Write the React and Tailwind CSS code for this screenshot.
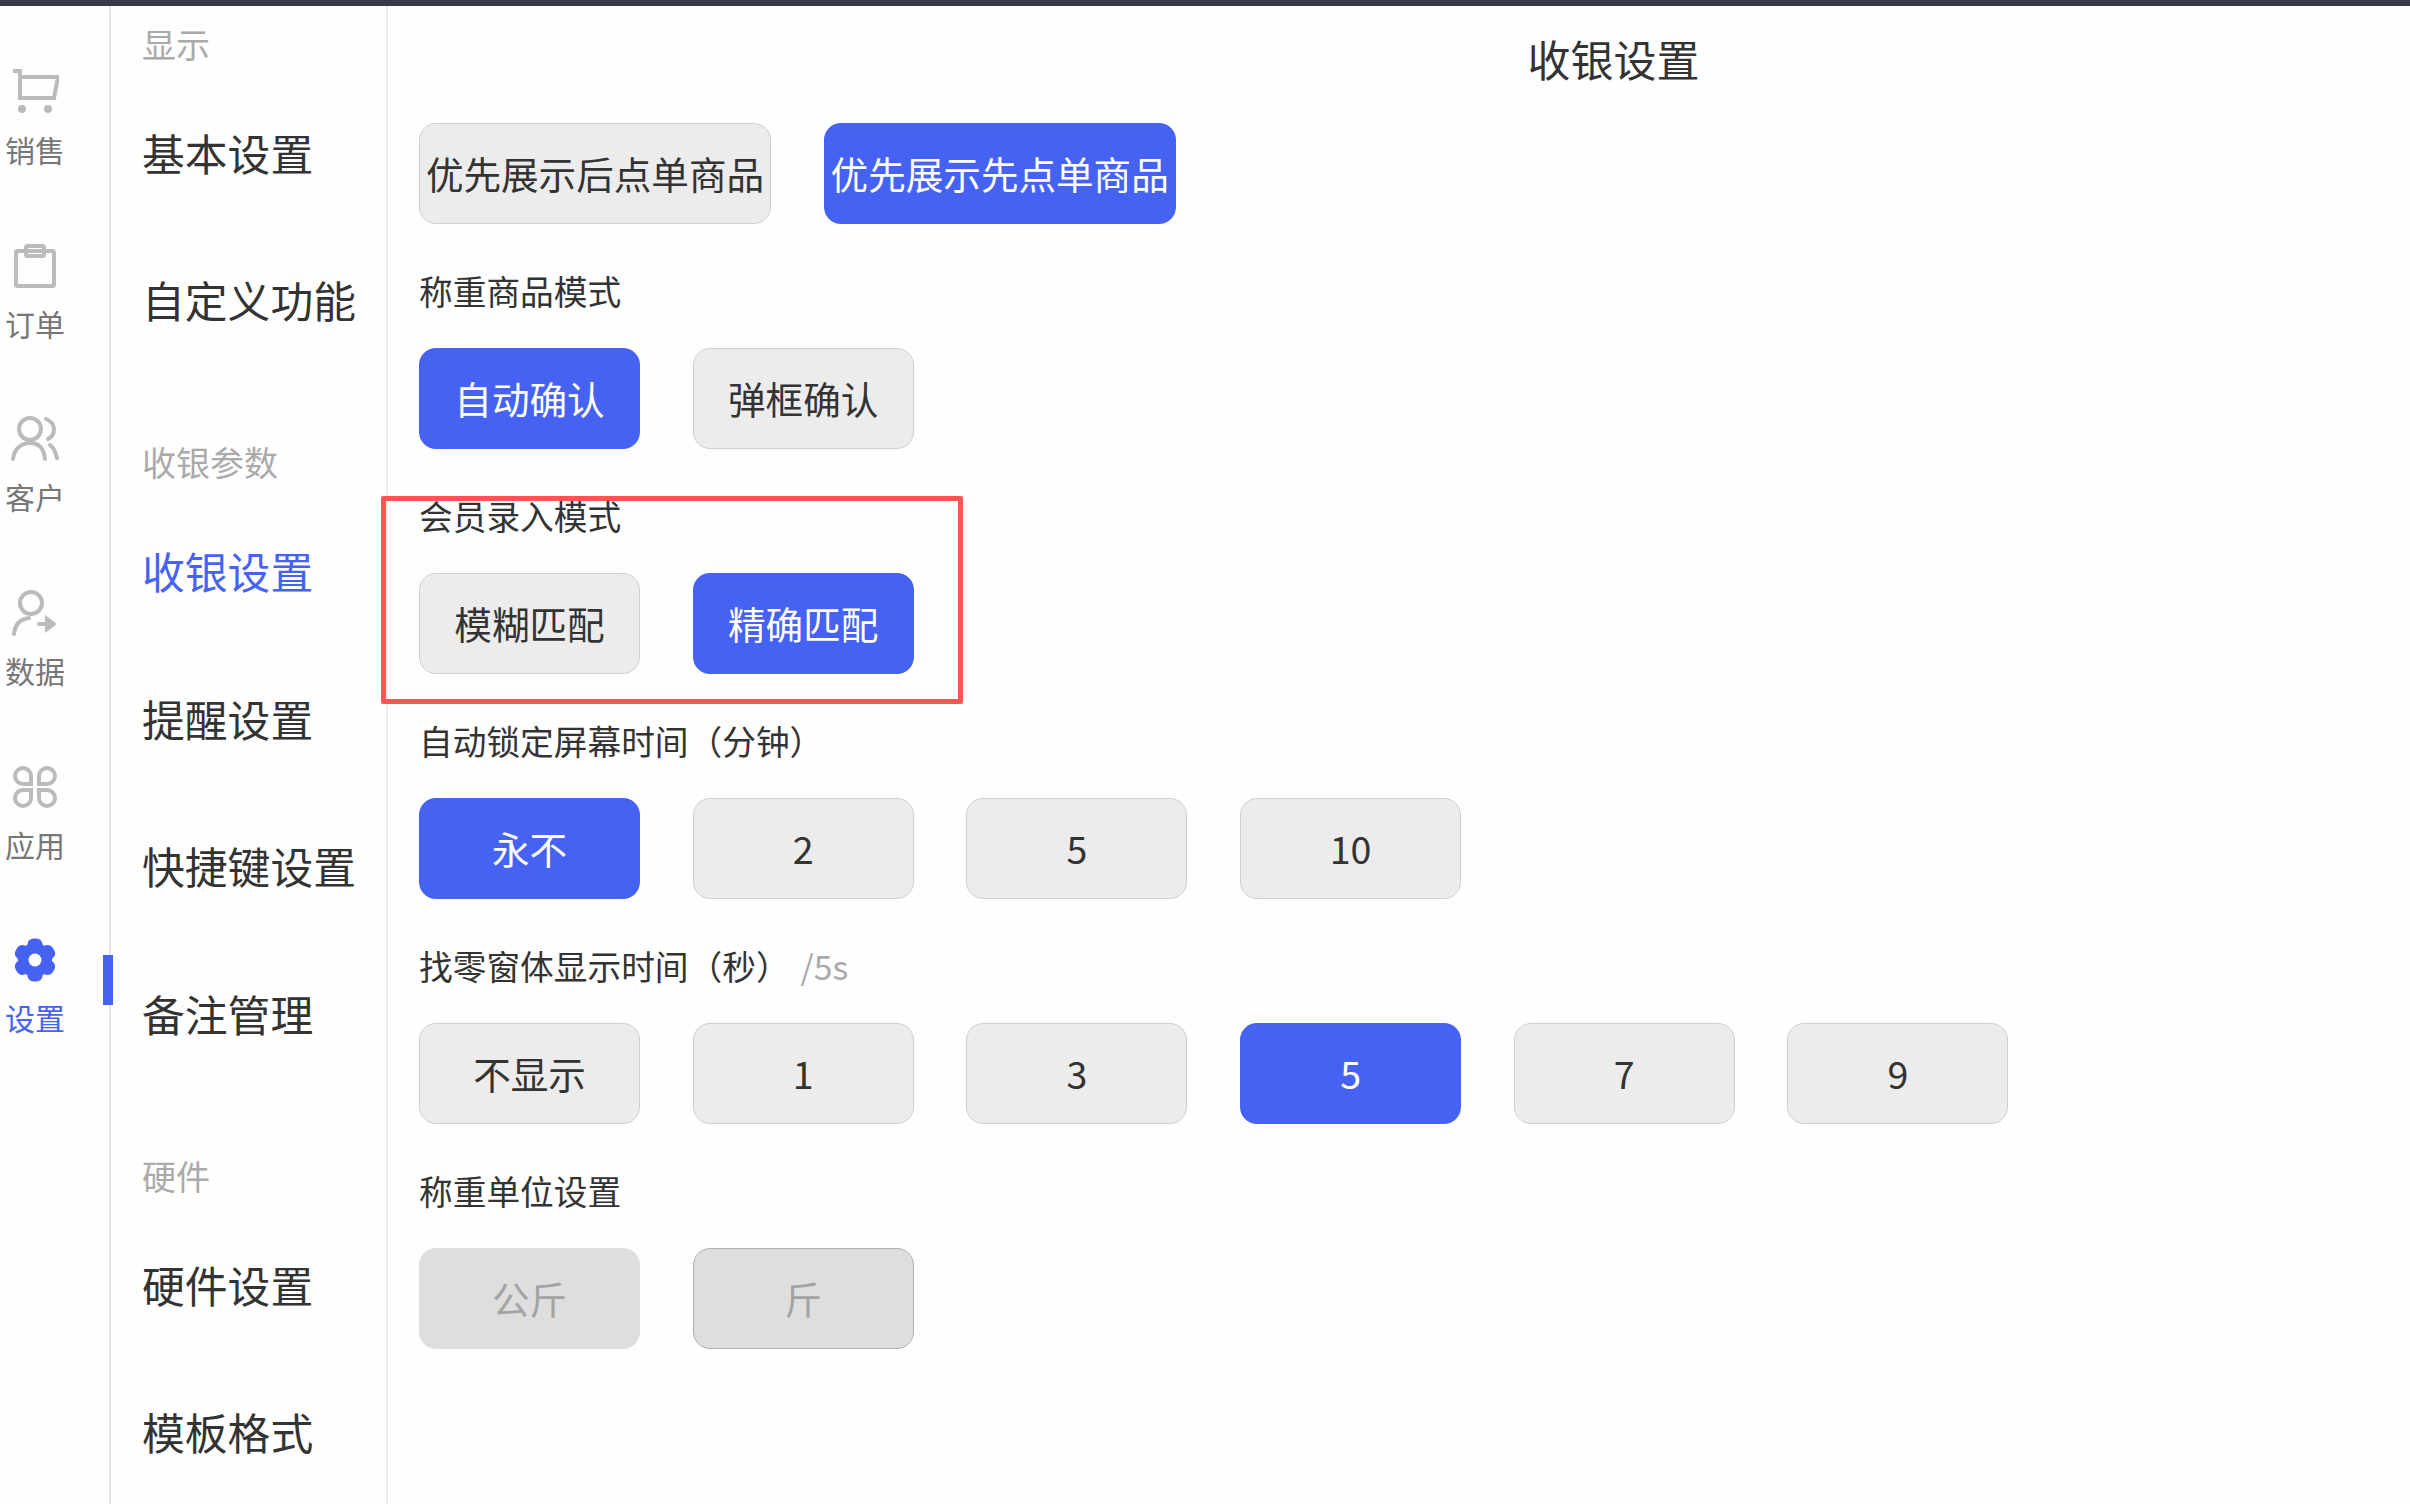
const FONT = "font-['Noto_Sans_CJK_SC','Noto_Sans',sans-serif]"

const CartIcon = () => (
  <svg width="48" height="48" viewBox="0 0 48 48" fill="none" stroke="currentColor" strokeWidth="4">
    <path d="M2 3h7v27h34l4-21H9" />
    <circle cx="11" cy="41" r="4" fill="currentColor" stroke="none" />
    <circle cx="37" cy="41" r="4" fill="currentColor" stroke="none" />
  </svg>
)

const OrderIcon = () => (
  <svg width="42" height="44" viewBox="0 0 42 44" fill="none" stroke="currentColor" strokeWidth="4">
    <rect x="2" y="7" width="38" height="35" rx="1.500" />
    <rect x="12" y="2" width="18" height="10" rx="1.500" />
  </svg>
)

const UsersIcon = () => (
  <svg width="48" height="46" viewBox="0 0 48 46" fill="none" stroke="currentColor" strokeWidth="4" strokeLinecap="round">
    <circle cx="19" cy="13" r="11" />
    <path d="M2 43c1-10 8-16 17-16s14 6 15 16" />
    <path d="M35 3c5 2 8 6 8 10s-2 8-6 10" />
    <path d="M39 29c4 3 6 8 7 13" />
  </svg>
)

const DataIcon = () => (
  <svg width="46" height="46" viewBox="0 0 46 46" fill="none" stroke="currentColor" strokeWidth="4" strokeLinecap="round">
    <circle cx="19" cy="13" r="11" />
    <path d="M2 44c1-10 6-15 15-16" />
    <path d="M27 34h8" />
    <path d="M33 25l12 9-12 9z" fill="currentColor" stroke="none" />
  </svg>
)

const AppsIcon = () => (
  <svg width="44" height="42" viewBox="0 0 44 42" fill="none" stroke="currentColor" strokeWidth="4">
    <path d="M18 18H10a8 8 0 1 1 8-8z" />
    <path d="M26 18h8a8 8 0 1 0-8-8z" />
    <path d="M18 24H10a8 8 0 1 0 8 8z" />
    <path d="M26 24h8a8 8 0 1 1-8 8z" />
  </svg>
)

// six lobes around a hub, the hole is painted over
const GearIcon = () => (
  <svg width="46" height="46" viewBox="0 0 46 46">
    <g fill="currentColor">
      <circle cx="23" cy="23" r="17" />
      {[0, 60, 120, 180, 240, 300].map((deg) => (
        <rect key={deg} x="15.500" y="1.500" width="15" height="12" rx="6" transform={`rotate(${deg} 23 23)`} />
      ))}
    </g>
    <circle cx="23" cy="23" r="6.500" fill="#fefefe" />
  </svg>
)

const RAIL = [
  { label: '销售', icon: CartIcon },
  { label: '订单', icon: OrderIcon },
  { label: '客户', icon: UsersIcon },
  { label: '数据', icon: DataIcon },
  { label: '应用', icon: AppsIcon },
  { label: '设置', icon: GearIcon, active: true },
]

const MENU = [
  { title: '显示', items: ['基本设置', '自定义功能'] },
  { title: '收银参数', items: ['收银设置', '提醒设置', '快捷键设置', '备注管理'] },
  { title: '硬件', items: ['硬件设置', '模板格式'] },
]

const SECTIONS = [
  { options: ['优先展示后点单商品', '优先展示先点单商品'], selected: 1, wide: true },
  { label: '称重商品模式', options: ['自动确认', '弹框确认'], selected: 0 },
  { label: '会员录入模式', options: ['模糊匹配', '精确匹配'], selected: 1 },
  { label: '自动锁定屏幕时间（分钟）', options: ['永不', '2', '5', '10'], selected: 0 },
  { label: '找零窗体显示时间（秒）', hint: '/5s', options: ['不显示', '1', '3', '5', '7', '9'], selected: 3 },
  { label: '称重单位设置', options: ['公斤', '斤'], selected: 1, disabled: true },
]

function Option({ text, on, disabled, wide }) {
  let tone = 'bg-[#ececec] border border-[#cfcfcf] text-[#333]'
  if (on) tone = 'bg-[#4662f2] text-white'
  if (disabled) {
    tone = on
      ? 'bg-[#dedede] border border-[#b0b0b0] text-[#a3a3a3]'
      : 'bg-[#dedede] text-[#a3a3a3]'
  }
  return (
    <div
      className={`flex h-[101px] items-center justify-center rounded-[17px] pb-[1px] text-[37.600px] leading-none whitespace-nowrap ${wide ? 'w-[352px]' : 'w-[221px]'} ${tone}`}
    >
      {text}
    </div>
  )
}

export default function App() {
  return (
    <div className={`${FONT} relative flex h-screen flex-col overflow-hidden bg-[#fefefe] text-[#333]`}>
      <div className="h-[6px] shrink-0 bg-[#383a4a]" />
      <div className="flex min-h-0 flex-1">
        {/* icon rail */}
        <div className="relative w-[111px] shrink-0 border-r-2 border-[#e6e6e6] pt-[61px]">
          {RAIL.map(({ label, icon: Icon, active }) => (
            <div
              key={label}
              className={`flex h-[173.700px] w-[70px] flex-col items-center ${active ? 'text-[#4662f2]' : 'text-[#bbbbbb]'}`}
            >
              <div className="flex h-[50px] items-center justify-center">
                <Icon />
              </div>
              <span className={`mt-[12px] text-[30px] leading-[40px] ${active ? '' : 'text-[#777]'}`}>{label}</span>
            </div>
          ))}
          <div className="absolute top-[949px] left-[103px] h-[50px] w-[10px] bg-[#4662f2]" />
        </div>

        {/* settings menu */}
        <div className="w-[277px] shrink-0 border-r-2 border-[#ececec] pt-[2px] pl-[31px]">
          {MENU.map((group, i) => (
            <div key={group.title} className={i > 0 ? 'mt-[53.500px]' : ''}>
              <div className="flex h-[70px] items-center text-[34px] text-[#aaaaaa]">{group.title}</div>
              {group.items.map((item) => (
                <div
                  key={item}
                  className={`flex h-[147.500px] items-center text-[42.800px] whitespace-nowrap ${item === '收银设置' ? 'text-[#4662f2]' : 'text-[#333]'}`}
                >
                  {item}
                </div>
              ))}
            </div>
          ))}
        </div>

        {/* cashier settings */}
        <div className="relative min-w-0 flex-1 pl-[31px]">
          <div className="flex h-[117px] items-start justify-center pt-[22px] pl-[398px] text-[43px] leading-[60px]">
            收银设置
          </div>
          {SECTIONS.map((section, i) => (
            <div key={i} className={i === 0 ? '' : 'mt-[44px]'}>
              {section.label && (
                <div className="mb-[30px] flex h-[50px] items-center pb-[3px] text-[33.700px] whitespace-nowrap">
                  {section.label}
                  {section.hint && <span className="ml-[11px] text-[#aaaaaa]">{section.hint}</span>}
                </div>
              )}
              <div className="flex gap-[52.700px]">
                {section.options.map((opt, j) => (
                  <Option
                    key={j}
                    text={opt}
                    on={j === section.selected}
                    disabled={section.disabled}
                    wide={section.wide}
                  />
                ))}
              </div>
            </div>
          ))}
          {/* red annotation box */}
          <div className="absolute top-[490px] left-[-7px] h-[208px] w-[582px] rounded-[2px] border-[5px] border-[#ff5555]" />
        </div>
      </div>
    </div>
  )
}
